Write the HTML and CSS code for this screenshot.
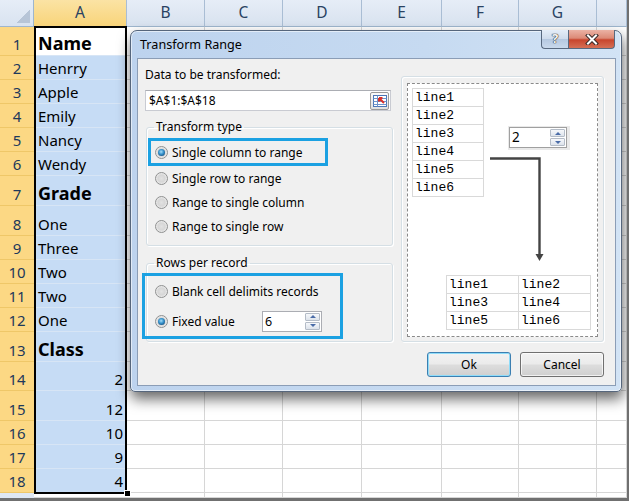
FILE: index.html
```html
<!DOCTYPE html>
<html>
<head>
<meta charset="utf-8">
<title>Transform Range</title>
<link rel="stylesheet" href="styles.css">
</head>
<body>
<div class="screen">
  <div class="sheet">
    <div class="row h27"><div class="corner"></div><div class="ch sel">A</div><div class="ch">B</div><div class="ch">C</div><div class="ch">D</div><div class="ch">E</div><div class="ch">F</div><div class="ch">G</div><div class="ch"></div></div>
    <div class="row h29"><div class="rh">1</div><div class="a active b">Name</div><div class="c"></div><div class="c"></div><div class="c"></div><div class="c"></div><div class="c"></div><div class="c"></div><div class="c"></div></div>
    <div class="row"><div class="rh">2</div><div class="a">Henrry</div><div class="c"></div><div class="c"></div><div class="c"></div><div class="c"></div><div class="c"></div><div class="c"></div><div class="c"></div></div>
    <div class="row"><div class="rh">3</div><div class="a">Apple</div><div class="c"></div><div class="c"></div><div class="c"></div><div class="c"></div><div class="c"></div><div class="c"></div><div class="c"></div></div>
    <div class="row"><div class="rh">4</div><div class="a">Emily</div><div class="c"></div><div class="c"></div><div class="c"></div><div class="c"></div><div class="c"></div><div class="c"></div><div class="c"></div></div>
    <div class="row"><div class="rh">5</div><div class="a">Nancy</div><div class="c"></div><div class="c"></div><div class="c"></div><div class="c"></div><div class="c"></div><div class="c"></div><div class="c"></div></div>
    <div class="row"><div class="rh">6</div><div class="a">Wendy</div><div class="c"></div><div class="c"></div><div class="c"></div><div class="c"></div><div class="c"></div><div class="c"></div><div class="c"></div></div>
    <div class="row h30"><div class="rh">7</div><div class="a b">Grade</div><div class="c"></div><div class="c"></div><div class="c"></div><div class="c"></div><div class="c"></div><div class="c"></div><div class="c"></div></div>
    <div class="row h30"><div class="rh">8</div><div class="a">One</div><div class="c"></div><div class="c"></div><div class="c"></div><div class="c"></div><div class="c"></div><div class="c"></div><div class="c"></div></div>
    <div class="row"><div class="rh">9</div><div class="a">Three</div><div class="c"></div><div class="c"></div><div class="c"></div><div class="c"></div><div class="c"></div><div class="c"></div><div class="c"></div></div>
    <div class="row"><div class="rh">10</div><div class="a">Two</div><div class="c"></div><div class="c"></div><div class="c"></div><div class="c"></div><div class="c"></div><div class="c"></div><div class="c"></div></div>
    <div class="row"><div class="rh">11</div><div class="a">Two</div><div class="c"></div><div class="c"></div><div class="c"></div><div class="c"></div><div class="c"></div><div class="c"></div><div class="c"></div></div>
    <div class="row"><div class="rh">12</div><div class="a">One</div><div class="c"></div><div class="c"></div><div class="c"></div><div class="c"></div><div class="c"></div><div class="c"></div><div class="c"></div></div>
    <div class="row h30"><div class="rh">13</div><div class="a b">Class</div><div class="c"></div><div class="c"></div><div class="c"></div><div class="c"></div><div class="c"></div><div class="c"></div><div class="c"></div></div>
    <div class="row h29"><div class="rh">14</div><div class="a num">2</div><div class="c"></div><div class="c"></div><div class="c"></div><div class="c"></div><div class="c"></div><div class="c"></div><div class="c"></div></div>
    <div class="row h30"><div class="rh">15</div><div class="a num">12</div><div class="c"></div><div class="c"></div><div class="c"></div><div class="c"></div><div class="c"></div><div class="c"></div><div class="c"></div></div>
    <div class="row"><div class="rh">16</div><div class="a num">10</div><div class="c"></div><div class="c"></div><div class="c"></div><div class="c"></div><div class="c"></div><div class="c"></div><div class="c"></div></div>
    <div class="row"><div class="rh">17</div><div class="a num">9</div><div class="c"></div><div class="c"></div><div class="c"></div><div class="c"></div><div class="c"></div><div class="c"></div><div class="c"></div></div>
    <div class="row"><div class="rh">18</div><div class="a num">4</div><div class="c"></div><div class="c"></div><div class="c"></div><div class="c"></div><div class="c"></div><div class="c"></div><div class="c"></div></div>
    <div class="row h5"><div class="rh plain"></div><div class="c"></div><div class="c"></div><div class="c"></div><div class="c"></div><div class="c"></div><div class="c"></div><div class="c"></div><div class="c"></div></div>
  </div>

  <div class="selbox"></div>
  <div class="handle"></div>

  <div class="dialog">
    <div class="titlebar">
      <span class="title">Transform Range</span>
      <div class="capbtns">
        <div class="help">?</div>
        <div class="close">
          <svg width="14" height="11" viewBox="0 0 14 11"><path d="M3 1.5 L11 9.5 M11 1.5 L3 9.5" stroke="#3a2a28" stroke-width="4" stroke-linecap="square"/><path d="M3 1.5 L11 9.5 M11 1.5 L3 9.5" stroke="#ffffff" stroke-width="2" stroke-linecap="square"/></svg>
        </div>
      </div>
    </div>
    <div class="client">
      <div class="main">
        <div class="left">
          <div class="lbl">Data to be transformed:</div>
          <div class="rangein">
            <span>$A$1:$A$18</span>
            <span class="pick">
              <svg width="14" height="12" viewBox="0 0 14 12"><rect x="0.5" y="0.5" width="13" height="11" fill="#fff" stroke="#4b77b8"/><path d="M0.5 3.5 H13.5 M0.5 6.5 H13.5 M0.5 9.5 H13.5 M4.5 0.5 V11.5" stroke="#6f95cc" stroke-width="1"/><path d="M6 3 L11 8 M6 3 L6 6.5 M6 3 L9.5 3" stroke="#d8312b" stroke-width="2"/></svg>
            </span>
          </div>
          <fieldset class="grp g1">
            <legend>Transform type</legend>
            <div class="hl"><div class="opt"><span class="radio on"></span>Single column to range</div></div>
            <div class="opt"><span class="radio"></span>Single row to range</div>
            <div class="opt"><span class="radio"></span>Range to single column</div>
            <div class="opt"><span class="radio"></span>Range to single row</div>
          </fieldset>
          <fieldset class="grp g2">
            <legend>Rows per record</legend>
            <div class="hl2">
              <div class="opt"><span class="radio"></span>Blank cell delimits records</div>
              <div class="opt"><span class="radio on"></span>Fixed value
                <div class="spin six"><span class="val">6</span><div class="sbtns"><div class="sb"><i class="up"></i></div><div class="sb"><i class="dn"></i></div></div></div>
              </div>
            </div>
          </fieldset>
        </div>
        <div class="preview">
          <div class="canvas">
            <div class="tbl src">
              <div class="cell">line1</div><div class="cell">line2</div><div class="cell">line3</div><div class="cell">line4</div><div class="cell">line5</div><div class="cell">line6</div>
            </div>
            <div class="tbl res">
              <div class="cell">line1</div><div class="cell">line2</div><div class="cell">line3</div><div class="cell">line4</div><div class="cell">line5</div><div class="cell">line6</div>
            </div>
            <div class="spinwrap">
              <div class="spin two"><span class="val">2</span><div class="sbtns"><div class="sb"><i class="up"></i></div><div class="sb"><i class="dn"></i></div></div></div>
            </div>
            <svg class="arrow" width="189" height="252" viewBox="0 0 189 252"><path d="M82 74.5 H131.5 V171" fill="none" stroke="#444" stroke-width="2.4"/><path d="M127.5 170 H135.5 L131.5 177 Z" fill="#444"/></svg>
          </div>
        </div>
      </div>
      <div class="buttons">
        <button class="btn ok">Ok</button>
        <button class="btn">Cancel</button>
      </div>
    </div>
  </div>
</div>
</body>
</html>
```
FILE: styles.css
```css
* { box-sizing: border-box; }
html, body { margin: 0; padding: 0; }
body {
  width: 629px;
  height: 501px;
  overflow: hidden;
  background: #fff;
  font-family: "Noto Sans", "DejaVu Sans", sans-serif;
  color: #000;
}
.screen {
  position: relative;
  width: 629px;
  height: 501px;
  border-right: 2px solid #707070;
  border-bottom: 3px solid #707070;
  overflow: hidden;
}

/* ---------- sheet ---------- */
.row {
  display: grid;
  grid-template-columns: 34px 93px 78px 78px 79px 80px 77px 78px 30px;
  height: 24px;
}
.h27 { height: 27px; }
.h29 { height: 29px; }
.h30 { height: 30px; }
.h5 { height: 5px; }

.corner {
  background:
    linear-gradient(135deg, transparent 0 55%, #b7c5d7 55% 100%) right 3px bottom 3px / 15px 15px no-repeat,
    linear-gradient(#e6edf7, #d9e3f0);
  border-right: 1px solid #9eb6ce;
  border-bottom: 1px solid #9eb6ce;
}
.ch {
  background: linear-gradient(#e6edf7, #d8e2ef);
  border-right: 1px solid #a9bdd4;
  border-bottom: 1px solid #9eb6ce;
  text-align: center;
  font-size: 15.5px;
  line-height: 25px;
  color: #2a4262;
}
.ch.sel {
  background: linear-gradient(#fbe3a4, #f8d47a);
  border-bottom-color: #eeb64f;
}
.rh {
  background: #fcd884;
  border-bottom: 1px solid #efc768;
  display: flex;
  align-items: flex-end;
  justify-content: center;
  font-size: 15px;
  line-height: 20px;
  padding-bottom: 1px;
  color: #1e395b;
}
.rh.plain { background: #dfe7f2; border-bottom: none; }
.c {
  border-right: 1px solid #d6d6d6;
  border-bottom: 1px solid #d6d6d6;
}
.a {
  background: #c6dcf5;
  border-bottom: 1px solid #d7e5f5;
  display: flex;
  align-items: flex-end;
  padding: 0 4px 1px 4px;
  font-size: 15px;
  line-height: 20px;
  white-space: nowrap;
}
.a.active { background: #fff; }
.a.b { font-weight: 700; font-size: 18px; line-height: 24px; padding-bottom: 0; }
.a.num { justify-content: flex-end; }

.selbox {
  position: absolute;
  left: 34px;
  top: 26px;
  width: 93px;
  height: 468px;
  border: 2px solid #000;
  pointer-events: none;
}
.handle {
  position: absolute;
  left: 124px;
  top: 490px;
  width: 7px;
  height: 7px;
  background: #000;
  border: 1px solid #fff;
}

/* ---------- dialog ---------- */
.dialog {
  position: absolute;
  left: 130px;
  top: 30px;
  width: 492px;
  height: 362px;
  border: 1px solid #56667c;
  border-radius: 7px 7px 5px 5px;
  background: linear-gradient(to right, #bdd3ee 0%, #c6daf1 60%, #d2e3f5 100%);
  box-shadow: inset 0 0 0 1px rgba(255,255,255,0.55), 1px 7px 14px rgba(0,0,0,0.6);
  display: flex;
  flex-direction: column;
}
.titlebar {
  height: 27px;
  display: flex;
  align-items: center;
  justify-content: space-between;
  padding: 0 6px 0 9px;
}
.title { font-size: 12.6px; color: #000; }
.capbtns {
  align-self: flex-start;
  margin-top: -1px;
  display: flex;
  height: 19px;
}
.help {
  width: 27px;
  border: 1px solid #58697f;
  border-top: none;
  border-right: none;
  border-radius: 0 0 0 4px;
  background: linear-gradient(#e4edf8 0%, #cfdcec 48%, #b5c8e0 52%, #c9d9ec 100%);
  color: #f4f4f4;
  font-weight: 700;
  font-size: 13px;
  line-height: 17px;
  text-align: center;
  text-shadow: 0 0 1px #333, 0 0 1px #333, 0 0 1px #333;
}
.close {
  width: 47px;
  border: 1px solid #58697f;
  border-top: none;
  border-radius: 0 0 4px 0;
  background: linear-gradient(#ebb2a4 0%, #dc8a77 45%, #c8452d 55%, #d56f55 100%);
  display: flex;
  align-items: center;
  justify-content: center;
}
.client {
  margin: 0 5px 5px 6px;
  flex: 1;
  border: 1px solid #8b9db6;
  background: #f0f0f0;
  padding: 8px 11px 8px 7px;
  display: flex;
  flex-direction: column;
}
.main { display: flex; gap: 8px; }
.left { width: 248px; display: flex; flex-direction: column; }
.lbl { font-size: 12px; line-height: 16px; }
.rangein {
  margin-top: 7px;
  width: 246px;
  height: 21px;
  border: 1px solid #c9cbd2;
  border-top-color: #abadb3;
  background: #fff;
  display: flex;
  align-items: center;
  justify-content: space-between;
  padding: 0 1px 0 3px;
  font-size: 12px;
}
.pick {
  width: 19px;
  height: 18px;
  border: 1px solid #9a9a9a;
  border-radius: 2px;
  background: linear-gradient(#fbfbfb, #e0e0e0);
  display: flex;
  align-items: center;
  justify-content: center;
}
.grp {
  margin: 0 0 0 1px;
  border: 1px solid #d5dfe5;
  border-radius: 3px;
  width: 247px;
  min-width: 0;
  box-shadow: inset 1px 1px 0 #fff, 1px 1px 0 #fff;
}
.grp legend {
  margin-left: 6px;
  padding: 0 2px;
  font-size: 12px;
  line-height: 16px;
}
.g1 { margin-top: 8px; padding: 3px 0 7px 1px; }
.g2 { margin-top: 9px; padding: 2px 0 2px 1px; }
.hl {
  width: 180px;
  height: 28px;
  border: 3px solid #1ba1e2;
  display: flex;
  align-items: center;
}
.opt {
  display: flex;
  align-items: center;
  height: 24px;
  gap: 4px;
  padding-left: 7px;
  font-size: 12px;
  white-space: nowrap;
}
.hl .opt { padding-left: 4px; height: 22px; }
.hl2 {
  margin-left: -6px;
  width: 201px;
  height: 66px;
  border: 3px solid #1ba1e2;
  display: flex;
  flex-direction: column;
}
.hl2 .opt { height: 30px; padding-left: 10px; }
.radio {
  position: relative;
  flex: none;
  width: 13px;
  height: 13px;
  border-radius: 50%;
  border: 1px solid #8f9090;
  background: radial-gradient(circle at 50% 50%, #e2e2e2 0, #d6d6d6 45%, #f2f2f2 80%, #fbfbfb 100%);
}
.radio.on::after {
  content: "";
  position: absolute;
  left: 2px;
  top: 2px;
  width: 7px;
  height: 7px;
  border-radius: 50%;
  background: radial-gradient(circle at 45% 40%, #a8def8 0, #3d98d0 40%, #0d4a7c 85%);
}
.spin {
  display: flex;
  height: 21px;
  border: 1px solid #abadb3;
  background: #fff;
  justify-content: space-between;
  align-items: stretch;
  padding-left: 2px;
}
.spin.six { width: 60px; margin-left: auto; margin-right: 18px; }
.spin .val { font-size: 12.5px; line-height: 19px; }
.sbtns {
  display: flex;
  flex-direction: column;
  width: 15px;
  margin: 1px;
  gap: 1px;
}
.sb {
  flex: 1;
  border: 1px solid #b4bcc7;
  border-radius: 1px;
  background: linear-gradient(#f6f8fb, #dde3eb);
  display: flex;
  align-items: center;
  justify-content: center;
}
.sb i { display: block; width: 0; height: 0; border-left: 3px solid transparent; border-right: 3px solid transparent; }
.sb .up { border-bottom: 3px solid #4a6ca8; }
.sb .dn { border-top: 3px solid #4a6ca8; }

.preview {
  width: 203px;
  height: 266px;
  margin-top: 9px;
  border: 1px solid #d5dfe5;
  border-radius: 3px;
  padding: 6px 5px 4px 5px;
  box-shadow: inset 1px 1px 0 #fff, 1px 1px 0 #fff;
}
.canvas {
  position: relative;
  height: 100%;
  border: 1px dashed #8a8a8a;
  background: #fff;
  display: flex;
  flex-direction: column;
  align-items: flex-start;
}
.tbl {
  display: grid;
  border-top: 1px solid #d9d9d9;
  border-left: 1px solid #d9d9d9;
  font-family: "Liberation Mono", "DejaVu Sans Mono", monospace;
  font-size: 13px;
}
.tbl .cell {
  height: 18px;
  border-right: 1px solid #d9d9d9;
  border-bottom: 1px solid #d9d9d9;
  padding-left: 2px;
  line-height: 18px;
}
.src { grid-template-columns: 71px; margin: 4px 0 0 4px; }
.res { grid-template-columns: 72px 72px; margin: 78px 0 0 38px; }
.spinwrap {
  position: absolute;
  left: 100px;
  top: 42px;
  width: 62px;
  height: 24px;
  background: #e9e9e9;
  padding: 1px 3px 2px 1px;
}
.spin.two { width: 58px; border-color: #a0a0a0; }
.spin.two .val { font-size: 13.5px; }
.arrow { position: absolute; left: 0; top: 0; }

.buttons {
  display: flex;
  justify-content: flex-end;
  gap: 9px;
  margin-top: 10px;
}
.btn {
  width: 84px;
  height: 25px;
  border: 1px solid #707070;
  border-radius: 3px;
  background: linear-gradient(#f2f2f2 0%, #ebebeb 48%, #dddddd 52%, #cfcfcf 100%);
  box-shadow: inset 0 0 0 1px rgba(255,255,255,0.7);
  font-family: "Noto Sans", "DejaVu Sans", sans-serif;
  font-size: 12px;
  color: #000;
  padding: 0;
}
.btn.ok {
  border-color: #3c7fb1;
  box-shadow: inset 0 0 0 1px #8fdcf9;
}
```
